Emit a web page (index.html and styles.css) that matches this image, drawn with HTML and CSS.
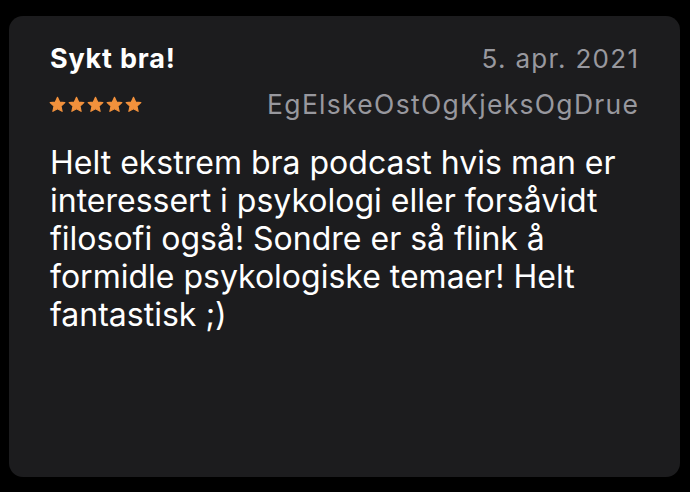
FILE: index.html
```html
<!DOCTYPE html>
<html>
<head>
<meta charset="utf-8">
<link rel="stylesheet" href="styles.css">
</head>
<body>
<div class="card">
  <div class="row">
    <div class="title">Sykt bra!</div>
    <div class="date">5. apr. 2021</div>
  </div>
  <div class="row row2">
    <div class="stars">
      <svg class="star" viewBox="0 0 24 24"><path d="M12 1.8L15.06 8.59 22.4 9.4 16.95 14.41 18.5 21.7 12 18 5.5 21.7 7.05 14.41 1.6 9.4 8.94 8.59z"/></svg>
      <svg class="star" viewBox="0 0 24 24"><path d="M12 1.8L15.06 8.59 22.4 9.4 16.95 14.41 18.5 21.7 12 18 5.5 21.7 7.05 14.41 1.6 9.4 8.94 8.59z"/></svg>
      <svg class="star" viewBox="0 0 24 24"><path d="M12 1.8L15.06 8.59 22.4 9.4 16.95 14.41 18.5 21.7 12 18 5.5 21.7 7.05 14.41 1.6 9.4 8.94 8.59z"/></svg>
      <svg class="star" viewBox="0 0 24 24"><path d="M12 1.8L15.06 8.59 22.4 9.4 16.95 14.41 18.5 21.7 12 18 5.5 21.7 7.05 14.41 1.6 9.4 8.94 8.59z"/></svg>
      <svg class="star" viewBox="0 0 24 24"><path d="M12 1.8L15.06 8.59 22.4 9.4 16.95 14.41 18.5 21.7 12 18 5.5 21.7 7.05 14.41 1.6 9.4 8.94 8.59z"/></svg>
    </div>
    <div class="author">EgElskeOstOgKjeksOgDrue</div>
  </div>
  <p class="body">Helt ekstrem bra podcast hvis man er interessert i psykologi eller forsåvidt filosofi også! Sondre er så flink å formidle psykologiske temaer! Helt fantastisk ;)</p>
</div>
</body>
</html>
```
FILE: styles.css
```css
html, body { margin: 0; padding: 0; background: #000; }
body { width: 690px; height: 492px; padding: 16px 10px 15px 9px; box-sizing: border-box; font-family: Inter, "Noto Sans", sans-serif; }
.card { background: #1c1c1e; border-radius: 14px; height: 100%; box-sizing: border-box; padding: 27px 42px 0 41px; }
.row { display: flex; justify-content: space-between; align-items: flex-start; }
.title { color: #fff; font-weight: 700; font-size: 27px; line-height: 32px; letter-spacing: 0.8px; }
.date { color: #98989e; font-size: 26px; line-height: 32px; letter-spacing: 1.3px; margin-right: -1.3px; }
.row2 { margin-top: 13.6px; align-items: center; }
.stars { display: flex; gap: 2px; padding-top: 2px; margin-left: -1px; }
.star { width: 17px; height: 17px; fill: #f2913c; stroke: #f2913c; stroke-width: 1.6; stroke-linejoin: round; display: block; overflow: visible; }
.author { color: #98989e; font-size: 26.5px; line-height: 30px; letter-spacing: 1.3px; margin-right: -1.3px; }
.body { color: #fff; font-size: 32px; line-height: 38px; margin: 25px 0 0; }
```
